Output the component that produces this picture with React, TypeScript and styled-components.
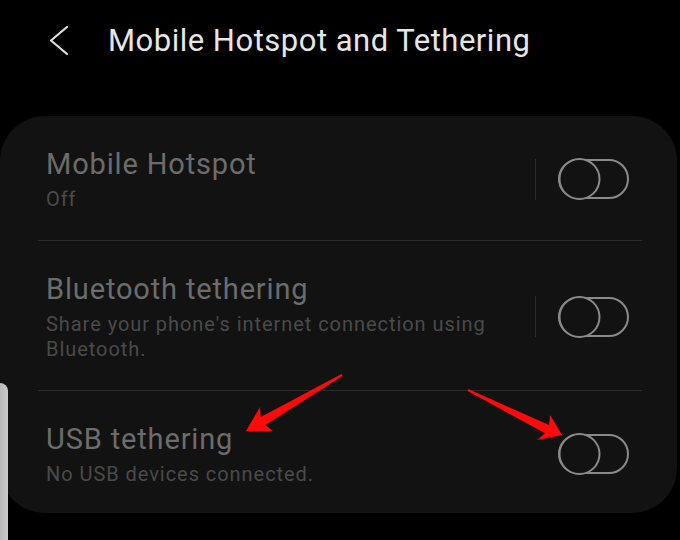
import React from "react";
import styled, { createGlobalStyle } from "styled-components";

const Global = createGlobalStyle`
  html, body { margin: 0; padding: 0; background: #000; }
  body { font-family: Roboto, "Noto Sans", "Liberation Sans", sans-serif; }
  #root { width: 680px; height: 540px; }
`;

const Page = styled.div`
  position: relative;
  width: 680px;
  height: 540px;
  background: #000;
  overflow: hidden;
`;

const Header = styled.header`
  display: flex;
  align-items: center;
  gap: 39px;
  height: 40px;
  padding: 21px 0 0 49px;
`;

const Title = styled.h1`
  margin: 0;
  font-size: 31px;
  line-height: 40px;
  font-weight: 400;
  letter-spacing: 0.5px;
  color: #e6e6e6;
`;

const Card = styled.section`
  margin-top: 55px;
  width: 677px;
  background: #121212;
  border-radius: 45px;
  display: flex;
  flex-direction: column;
`;

const Row = styled.div`
  display: flex;
  align-items: center;
  padding: 30px 47px 28px 46px;
  &:last-child { padding-bottom: 26px; }
`;

const Texts = styled.div`
  flex: 1;
  max-width: 460px;
  margin-right: auto;
  display: flex;
  flex-direction: column;
`;

const RowTitle = styled.div`
  font-size: 29px;
  line-height: 36px;
  letter-spacing: 0.85px;
  color: #6c6c6c;
`;

const RowSub = styled.div`
  margin-top: 5px;
  font-size: 20px;
  line-height: 25px;
  letter-spacing: 0.95px;
  color: #4a4a4a;
`;

const VSep = styled.div<{ $hidden?: boolean }>`
  width: 1px;
  height: 41px;
  background: #2c2c2c;
  margin-right: 22px;
  visibility: ${(p) => (p.$hidden ? "hidden" : "visible")};
`;

const Divider = styled.div`
  height: 1px;
  margin: 0 35px 0 38px;
  background: #2a2a2a;
`;

const EdgeStrip = styled.div`
  position: absolute;
  left: 0;
  top: 383px;
  width: 8px;
  height: 157px;
  background: linear-gradient(90deg, #b8b8b8, #cacaca);
  border-radius: 0 8px 0 0;
`;

const ArrowLayer = styled.svg`
  position: absolute;
  left: 0;
  top: 0;
  pointer-events: none;
`;

const ToggleSvg = styled.svg`
  display: block;
  flex: none;
`;

function Toggle() {
  return (
    <ToggleSvg width="72" height="44" viewBox="0 0 72 44">
      <rect x="1" y="3" width="69" height="38" rx="19" fill="none" stroke="#8a8a8a" strokeWidth="2" />
      <circle cx="21.5" cy="22" r="20" fill="#121212" stroke="#8a8a8a" strokeWidth="2" />
    </ToggleSvg>
  );
}

function Chevron() {
  return (
    <svg width="20" height="30" viewBox="0 0 20 30" style={{ flex: "none" }}>
      <polyline points="18,1 2,14.5 18,28" fill="none" stroke="#dedede" strokeWidth="2.2" strokeLinecap="round" strokeLinejoin="round" />
    </svg>
  );
}

type Item = { title: string; sub: string; sep: boolean };

const items: Item[] = [
  { title: "Mobile Hotspot", sub: "Off", sep: true },
  { title: "Bluetooth tethering", sub: "Share your phone's internet connection using Bluetooth.", sep: true },
  { title: "USB tethering", sub: "No USB devices connected.", sep: false },
];

export default function App() {
  return (
    <Page>
      <Global />
      <Header>
        <Chevron />
        <Title>Mobile Hotspot and Tethering</Title>
      </Header>
      <Card>
        {items.map((it, i) => (
          <React.Fragment key={it.title}>
            {i > 0 && <Divider />}
            <Row>
              <Texts>
                <RowTitle>{it.title}</RowTitle>
                <RowSub>{it.sub}</RowSub>
              </Texts>
              <VSep $hidden={!it.sep} />
              <Toggle />
            </Row>
          </React.Fragment>
        ))}
      </Card>
      <EdgeStrip />
      <ArrowLayer width="680" height="540" viewBox="0 0 680 540">
        <polygon
          fill="#ff0a0a"
          points="341.5,374.1 260.8,417.1 260,407 246,431 273,431 265.3,424.9 342.5,375.9"
        />
        <polygon
          fill="#ff0a0a"
          points="468.4,389.1 549,425.1 550,415 562,435 537,440 545.2,433.3 467.6,390.9"
        />
      </ArrowLayer>
    </Page>
  );
}
